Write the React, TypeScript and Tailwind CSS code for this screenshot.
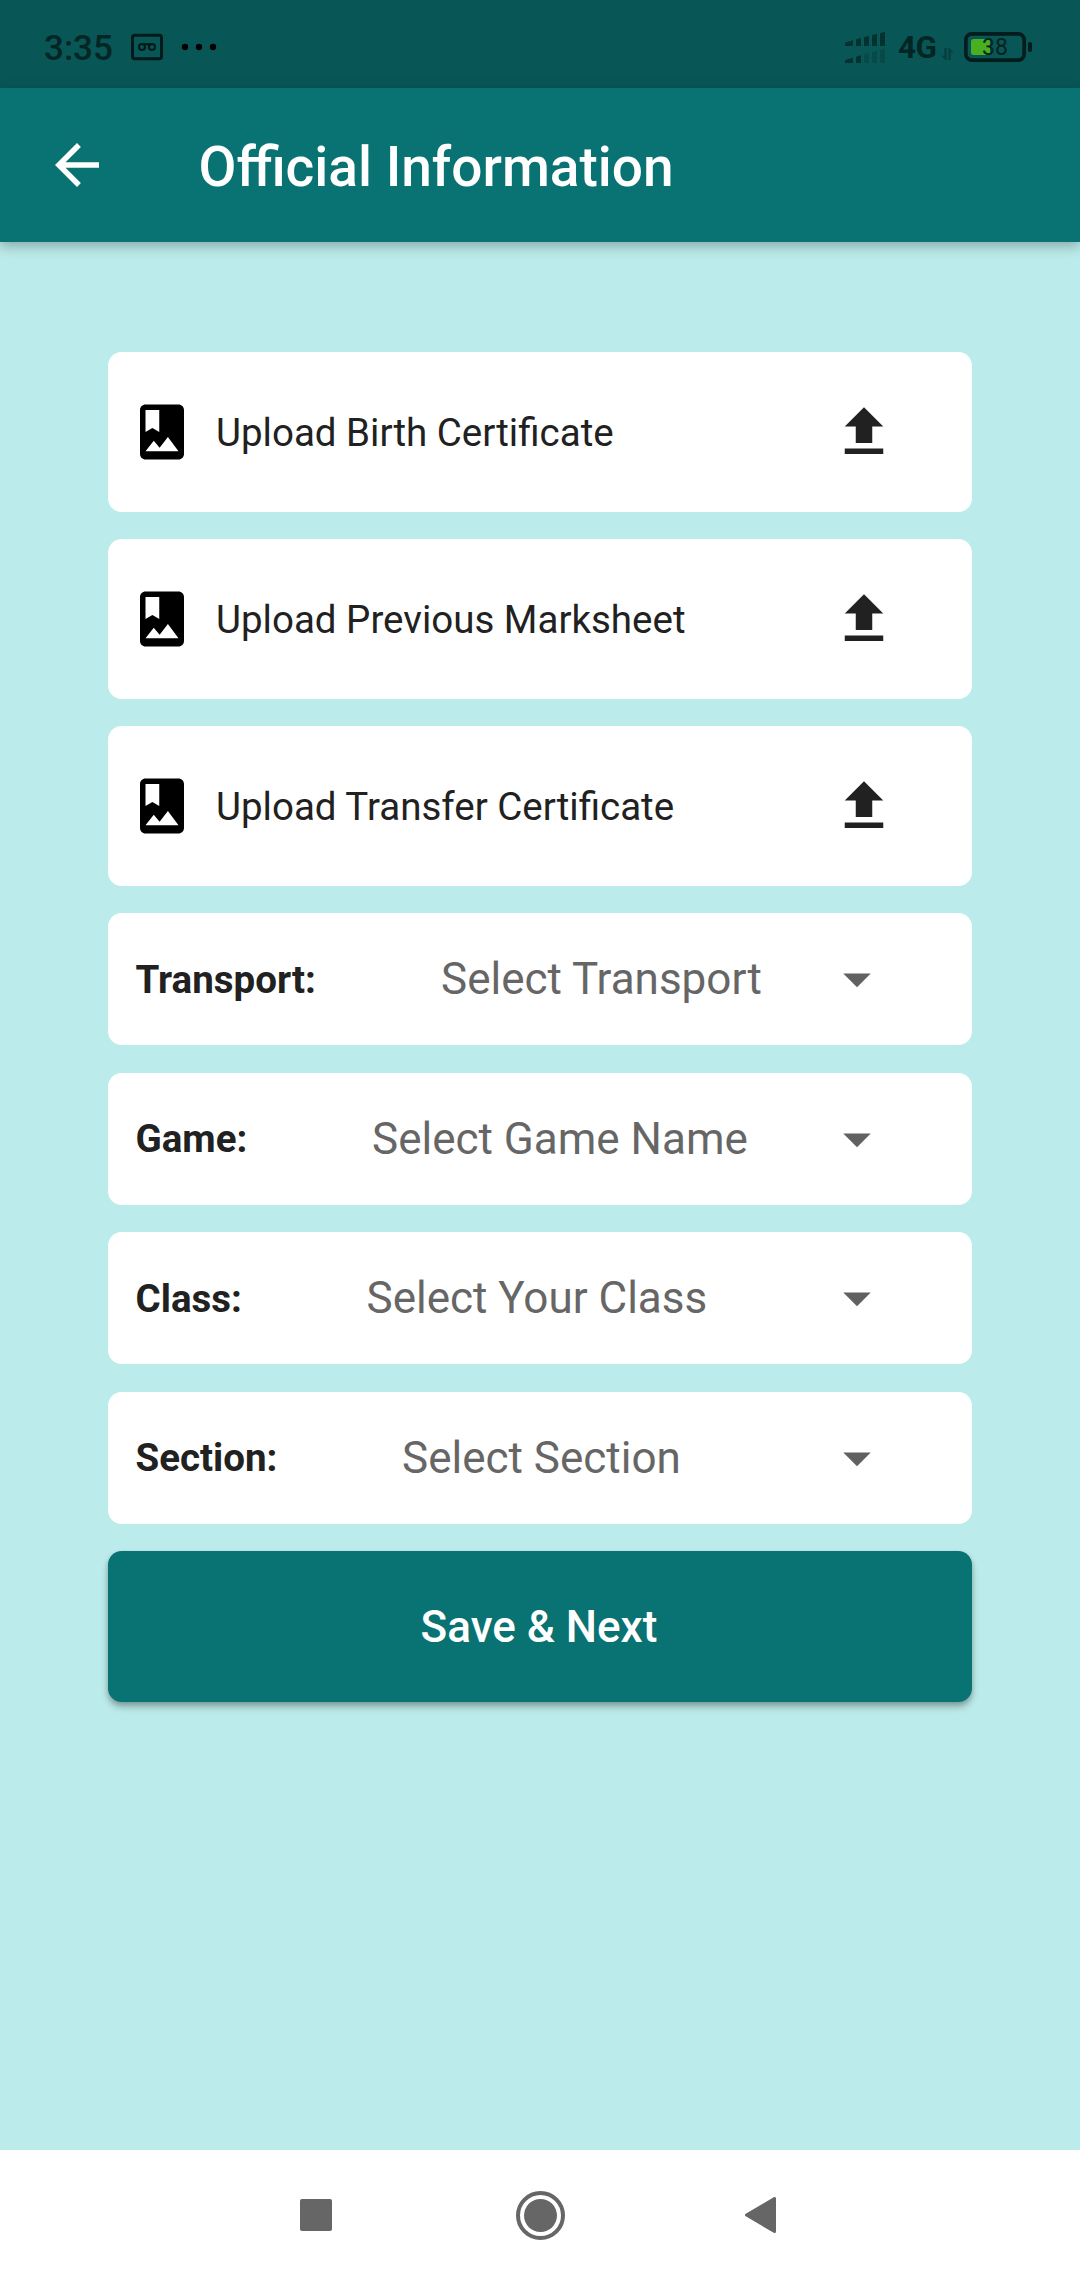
import type { ReactNode } from "react";

function MaterialIcon({ d, className }: { d: string; className: string }) {
  return (
    <svg viewBox="0 0 24 24" className={`size-[66px] shrink-0 ${className}`} fill="currentColor" aria-hidden="true">
      <path d={d} />
    </svg>
  );
}

const ARROW_BACK = "M20 11H7.83l5.59-5.59L12 4l-8 8 8 8 1.41-1.41L7.83 13H20v-2z";
const PHOTO_ALBUM =
  "M18 2H6c-1.1 0-2 .9-2 2v16c0 1.1.9 2 2 2h12c1.1 0 2-.9 2-2V4c0-1.1-.9-2-2-2zM6 4h5v8l-2.5-1.5L6 12V4zm0 15l3-3.86 2.14 2.58 3-3.86L18 19H6z";
const FILE_UPLOAD = "M9 16h6v-6h4l-7-7-7 7h4zm-4 2h14v2H5z";
const ARROW_DROP_DOWN = "M7 10l5 5 5-5z";

function StatusBar() {
  return (
    <div className="flex h-[88px] items-start bg-[#095656] text-[#032625]">
      <span className="ml-[44px] mt-[28px] w-[87px] text-[35px]/[41px] font-medium">3:35</span>
      <svg className="mt-[33px] h-[28px] w-[87px]" viewBox="0 0 261 84" fill="none" aria-hidden="true">
        <rect x="4.5" y="6.5" width="87" height="71" rx="7" stroke="#031a1a" strokeWidth="9" />
        <g stroke="#031a1a" strokeWidth="6.5">
          <circle cx="33" cy="42" r="9" />
          <circle cx="63" cy="42" r="9" />
          <path d="M33 33.5h30" />
        </g>
        <g fill="#000">
          <circle cx="162" cy="42" r="9.5" />
          <circle cx="204" cy="42" r="9.5" />
          <circle cx="246" cy="42" r="9.5" />
        </g>
      </svg>
      <svg className="ml-auto mt-[32px] h-[32px] w-[41px]" viewBox="0 0 123 96" aria-hidden="true">
        <g fill="#033231">
          <path d="M0 32l24-7v17H0zM33 22l15-4v24H33zM57 16l15-5v31H57zM81 10l15-5v37H81zM105 4l12-4h3v42h-15z" />
          <path d="M0 84l24-7v16H0zM33 74l15-4v23H33z" />
        </g>
        <path fill="#064a4a" d="M57 67l15-5v31H57zM81 61l15-5v37H81zM105 55l12-4h3v42h-15z" />
      </svg>
      <span className="ml-[12.5px] mt-[29px] w-[43px] text-[31.5px]/[38px] font-bold tracking-[-0.5px]">4G</span>
      <svg className="mt-[48px] h-[12px] w-[13px]" viewBox="0 0 39 36" aria-hidden="true" fill="#063f3f">
        <path d="M10 0h7v36h-3L1 23h9zM22 0h3l13 13h-9v23h-7z" />
      </svg>
      <div className="relative ml-[10px] mr-[48px] mt-[32px] h-[30px] w-[68px]">
        <svg className="h-[30px] w-[68px]" viewBox="0 0 204 90" aria-hidden="true">
          <rect x="5.5" y="5.5" width="175" height="79" rx="18" fill="none" stroke="#031d1d" strokeWidth="11" />
          <rect x="21" y="21" width="57" height="48" rx="8" fill="#49b022" />
          <rect x="192" y="30" width="12" height="30" rx="5" fill="#031d1d" />
        </svg>
        <span className="absolute left-[18px] top-[2px] text-[23px]/[27px] text-[#03241c]">38</span>
      </div>
    </div>
  );
}

function AppBar() {
  return (
    <header className="relative z-10 flex h-[154px] items-center bg-[#097272] pl-[44px] text-white shadow-[0_4px_12px_rgba(0,0,0,0.28)]">
      <button type="button" aria-label="Back">
        <MaterialIcon d={ARROW_BACK} className="" />
      </button>
      <h1 className="ml-[88.5px] mt-[4px] text-[55px]/[64px] font-medium">Official Information</h1>
    </header>
  );
}

function Card({ children, className }: { children: ReactNode; className: string }) {
  return <div className={`flex items-center rounded-[13.75px] bg-white ${className}`}>{children}</div>;
}

function UploadCard({ label }: { label: string }) {
  return (
    <Card className="h-[159.5px] pl-[21px] pr-[75px] text-[#212121]">
      <MaterialIcon d={PHOTO_ALBUM} className="text-black" />
      <span className="ml-[21px] mt-[3px] flex-1 text-[38.5px]/[46px]">{label}</span>
      <MaterialIcon d={FILE_UPLOAD} className="" />
    </Card>
  );
}

function SelectCard({ label, hint, labelWidth }: { label: string; hint: string; labelWidth: string }) {
  return (
    <Card className="h-[132px] pl-[27.5px] pr-[82.5px]">
      <span className={`mt-px shrink-0 text-[38.5px]/[46px] font-bold text-[#212121] ${labelWidth}`}>{label}</span>
      <span className="flex-1 whitespace-nowrap text-[44px]/[52px] text-[#666666]">{hint}</span>
      <MaterialIcon d={ARROW_DROP_DOWN} className="text-[#616161]" />
    </Card>
  );
}

function NavigationBar() {
  return (
    <nav className="flex h-[130px] items-center bg-white text-[#666666]">
      <svg className="ml-[300px] size-[32px]" viewBox="0 0 32 32" fill="currentColor" aria-hidden="true">
        <rect width="32" height="32" rx="2" />
      </svg>
      <svg className="ml-[184px] size-[49px]" viewBox="0 0 49 49" aria-hidden="true">
        <circle cx="24.5" cy="24.5" r="22.5" fill="none" stroke="currentColor" strokeWidth="4" />
        <circle cx="24.5" cy="24.5" r="16.5" fill="currentColor" />
      </svg>
      <svg className="ml-[180px] h-[36px] w-[31px]" viewBox="0 0 31 36" aria-hidden="true">
        <path d="M1.5 18 29.5 1.5v33z" fill="currentColor" stroke="currentColor" strokeWidth="3" strokeLinejoin="round" />
      </svg>
    </nav>
  );
}

export default function App() {
  return (
    <div className="flex h-[2280px] w-[1080px] flex-col overflow-hidden bg-[#bbebea] font-['Roboto',sans-serif]">
      <StatusBar />
      <AppBar />
      <main className="flex flex-1 flex-col gap-[27.5px] px-[108px] pt-[110px]">
        <UploadCard label="Upload Birth Certificate" />
        <UploadCard label="Upload Previous Marksheet" />
        <UploadCard label="Upload Transfer Certificate" />
        <SelectCard label="Transport:" hint="Select Transport" labelWidth="w-[305.5px]" />
        <SelectCard label="Game:" hint="Select Game Name" labelWidth="w-[236.5px]" />
        <SelectCard label="Class:" hint="Select Your Class" labelWidth="w-[231px]" />
        <SelectCard label="Section:" hint="Select Section" labelWidth="w-[266.5px]" />
        <button
          type="button"
          className="h-[151.25px] rounded-[13.75px] bg-[#097272] pr-[2px] text-[44px]/[52px] font-medium text-white shadow-[0_5px_7px_rgba(0,0,0,0.26),0_2px_4px_rgba(0,0,0,0.12)]"
        >
          Save &amp; Next
        </button>
      </main>
      <NavigationBar />
    </div>
  );
}
